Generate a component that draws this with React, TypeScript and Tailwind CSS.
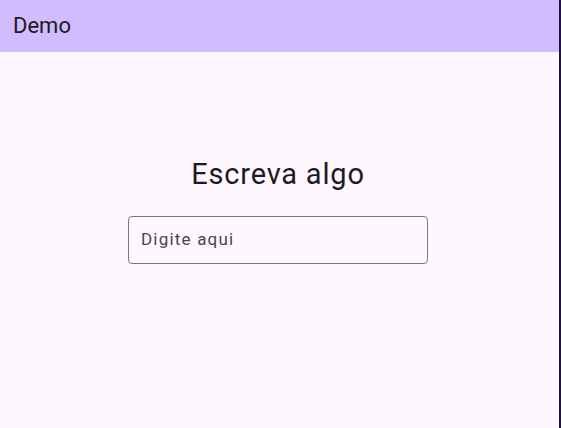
export default function App() {
  return (
    <div className="flex h-[428px] w-[561px] overflow-hidden" style={{ fontFamily: "Roboto, 'Noto Sans', sans-serif" }}>
      <div className="flex w-[559px] flex-col bg-[#FEF7FF]">
        <div className="flex h-[52px] items-center bg-[#D0BCFF] pl-[13px]">
          <span className="text-[22px] leading-[28px] text-[#1D1B20]">Demo</span>
        </div>
        <div className="flex flex-col items-center pr-[3px] pt-[104px]">
          <h1 className="text-[29px] leading-[36px] tracking-[0.8px] text-[#1D1B20]">Escreva algo</h1>
          <div className="mt-[24px] flex h-[48px] w-[300px] items-center rounded-[4px] border border-[#79747E] px-[12px]">
            <span className="text-[17px] tracking-[1.2px] text-[#49454F]">Digite aqui</span>
          </div>
        </div>
      </div>
      <div className="w-[2px] bg-[#21133F]" />
    </div>
  );
}
